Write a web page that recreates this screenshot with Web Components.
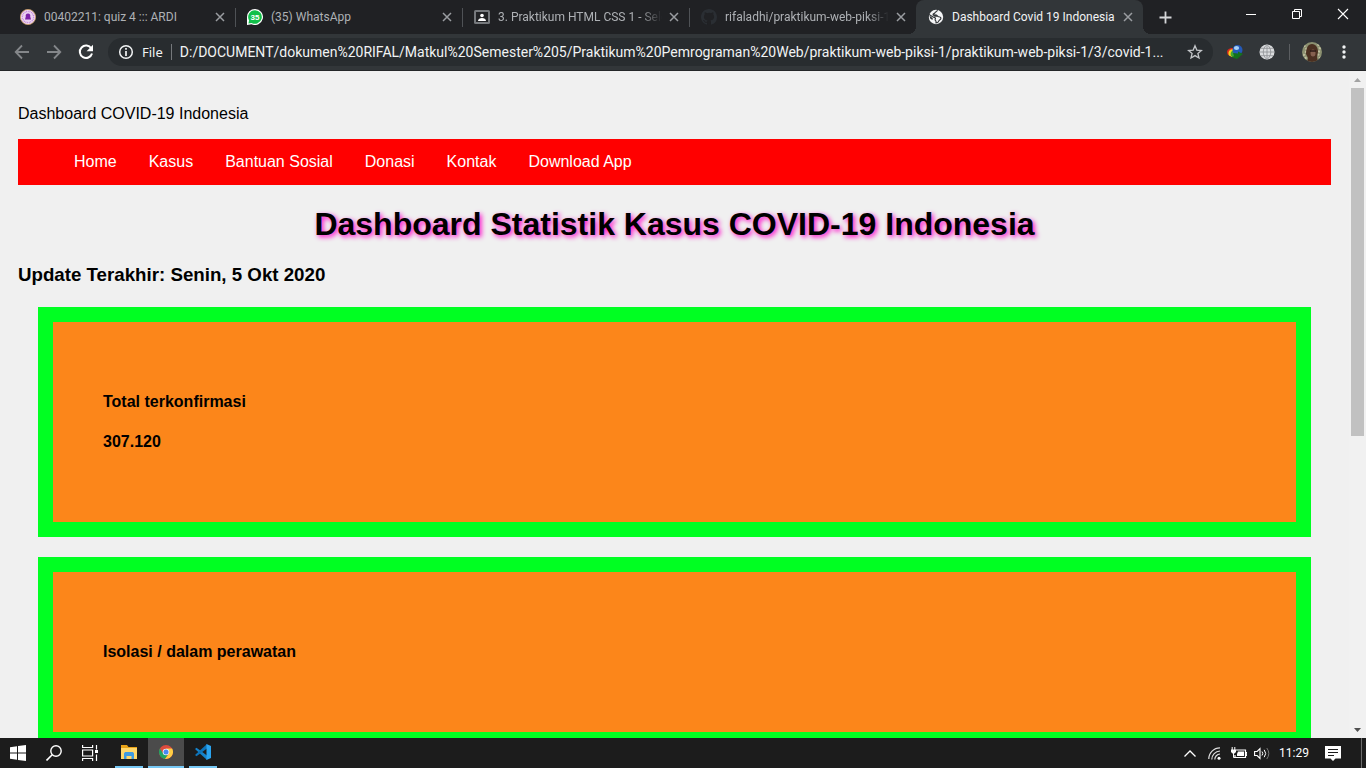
<!DOCTYPE html>
<html lang="id">
<head>
<meta charset="utf-8">
<title>Dashboard Covid 19 Indonesia</title>
<style>
html, body { margin: 0; height: 100%; }
body { overflow: hidden; font-family: "Liberation Sans", Arial, sans-serif; }
</style>
</head>
<body>
<desktop-screen></desktop-screen>
<script>
const define = (name, markup) => {
  const template = document.createElement('template');
  template.innerHTML = '<style>*{box-sizing:border-box} svg{display:block;flex:none} button{border:0;padding:0;margin:0;background:none;color:inherit;font:inherit;display:flex;align-items:center;justify-content:center;flex:none}</style>' + markup;
  customElements.define(name, class extends HTMLElement {
    constructor() {
      super();
      this.attachShadow({ mode: 'open' }).append(template.content.cloneNode(true));
    }
  });
};

define('browser-tab', `
<style>
:host { display: flex; flex: 0 1 227px; min-width: 0; position: relative; align-items: center; padding: 0 8px 0 12px; color: #aeb1b5; }
:host::after { content: ""; position: absolute; right: -1px; top: 8px; width: 1px; height: 19px; background: #4f5256; }
:host([plain])::after { display: none; }
:host([active]) { background: #323639; color: #f1f3f4; border-radius: 8px 8px 0 0; }
:host([active])::before, :host([active])::after { content: ""; display: block; position: absolute; top: auto; bottom: 0; width: 8px; height: 8px; }
:host([active])::before { left: -8px; background: radial-gradient(circle at 0 0, transparent 8px, #323639 8px); }
:host([active])::after { right: -8px; background: radial-gradient(circle at 100% 0, transparent 8px, #323639 8px); }
.title { flex: 1; min-width: 0; margin: 0 5px 0 8px; white-space: nowrap; overflow: hidden; font-size: 12px; line-height: 18px; }
:host([fade]) .title { -webkit-mask-image: linear-gradient(90deg, #000 86%, transparent); mask-image: linear-gradient(90deg, #000 86%, transparent); }
button { width: 14px; height: 16px; color: #9a9da1; }
</style>
<slot name="icon"></slot>
<span class="title"><slot></slot></span>
<button aria-label="Close tab"><svg width="10" height="10" viewBox="0 0 10 10"><path d="M1 1l8 8M9 1l-8 8" stroke="currentColor" stroke-width="1.5"/></svg></button>`);

define('tab-strip', `
<style>
:host { display: flex; height: 34px; background: #202124; padding-left: 8px; flex: none; }
.new { width: 44px; color: #d5d7d9; }
.win { display: flex; margin-left: auto; height: 28px; color: #fff; flex: none; }
.win button { width: 46px; }
</style>
<browser-tab>
  <svg slot="icon" width="16" height="16" viewBox="0 0 16 16"><circle cx="8" cy="8" r="7.6" fill="#f0dcf5" stroke="#c79b6b" stroke-width=".9"/><circle cx="8" cy="8" r="5.6" fill="none" stroke="#c58ad8" stroke-width="1.5" stroke-dasharray="1 .7"/><circle cx="8" cy="8" r="4" fill="#ead0f3"/><path d="M8 4.600c2 0 2.600 1.400 2.200 3L11 10.500H5l.8-2.900c-.4-1.600.2-3 2.200-3z" fill="#7d22a8"/></svg>
  00402211: quiz 4 ::: ARDI</browser-tab>
<browser-tab>
  <svg slot="icon" width="16" height="16" viewBox="0 0 16 16"><path d="M8 0a8 8 0 1 1-3.500 15.200L0 16V8a8 8 0 0 1 8-8z" fill="#fff"/><path d="M8 1.200a6.800 6.800 0 1 1-3.400 12.700L1.400 14.600l.7-3.200A6.800 6.800 0 0 1 8 1.200z" fill="#12c04a"/><text x="8" y="11" font-size="8" font-weight="700" fill="#fff" text-anchor="middle" font-family="Liberation Sans, sans-serif">35</text></svg>
  (35) WhatsApp</browser-tab>
<browser-tab fade>
  <svg slot="icon" width="16" height="16" viewBox="0 0 16 16"><rect x="0" y="1" width="16" height="14" rx="1.500" fill="#76797d"/><rect x="2" y="3" width="12" height="10" fill="#222326"/><circle cx="8" cy="6.500" r="1.800" fill="#fff"/><path d="M4 12c0-2 2-3 4-3s4 1 4 3z" fill="#fff"/></svg>
  3. Praktikum HTML CSS 1 - Sele</browser-tab>
<browser-tab fade plain>
  <svg slot="icon" width="16" height="16" viewBox="0 0 16 16"><path fill="#2a2e33" fill-rule="evenodd" d="M8 0C3.580 0 0 3.580 0 8c0 3.540 2.290 6.530 5.470 7.590.4.070.550-.170.550-.380v-1.490c-2.010.370-2.530-.490-2.690-.940-.090-.230-.480-.940-.820-1.130-.280-.150-.680-.520-.010-.530.630-.010 1.080.580 1.230.820.720 1.210 1.870.870 2.330.660.070-.520.280-.870.510-1.070-1.780-.200-3.640-.890-3.640-3.950 0-.870.310-1.590.820-2.150-.080-.200-.360-1.020.080-2.120 0 0 .670-.210 2.200.820A7.500 7.500 0 0 1 8 3.860c.680 0 1.360.090 2 .270 1.530-1.040 2.200-.820 2.200-.820.440 1.100.160 1.920.080 2.120.510.560.820 1.270.820 2.150 0 3.070-1.870 3.750-3.650 3.950.290.250.540.730.540 1.480v2.200c0 .210.150.460.550.380A8 8 0 0 0 16 8c0-4.420-3.580-8-8-8z"/></svg>
  rifaladhi/praktikum-web-piksi-1</browser-tab>
<browser-tab active>
  <svg slot="icon" width="16" height="16" viewBox="0 0 16 16"><circle cx="8" cy="8" r="7.200" fill="#f4f5f6"/><path d="M9.300.8c.5 1.300-.6 1.700-1.700 2.200-.8.400-.5 1.400-1.500 1.600-.9.200-1.300.7-.9 1.500h3.100c1 0 1.100 1.700 2.300 1.700 1.200.1 2.400.3 2.300 1.600-.1 1.300-1.500 1.200-2 2.400-.4 1.200-1.600 2.100-2.900 2.200v-1.600c0-.8-.9-.8-.9-1.600 0-.7.600-1 .3-1.700C6.900 8.200 5.500 8.600 4.600 7.700L1 5.400" fill="none" stroke="#323639" stroke-width="1.100"/><path d="M5.300 5.800h2.800l1.700 2H6.400zM1.400 6.500l3.400 2.800-.4 1.600-2.200-1.400z" fill="#323639"/></svg>
  Dashboard Covid 19 Indonesia</browser-tab>
<button class="new" aria-label="New tab"><svg width="13" height="13" viewBox="0 0 13 13"><path d="M6.500 .5v12M.5 6.500h12" stroke="currentColor" stroke-width="1.800"/></svg></button>
<div class="win">
  <button aria-label="Minimize"><svg width="10" height="10" viewBox="0 0 10 10"><path d="M0 5.500h10" stroke="currentColor"/></svg></button>
  <button aria-label="Restore"><svg width="10" height="10" viewBox="0 0 10 10"><path d="M.5 2.500h7v7h-7zM2.500 2.500v-2h7v7h-2" fill="none" stroke="currentColor"/></svg></button>
  <button aria-label="Close"><svg width="12" height="12" viewBox="0 0 12 12"><path d="M1 1l10 10M11 1L1 11" stroke="currentColor" stroke-width="1.100"/></svg></button>
</div>`);

define('address-bar', `
<style>
:host { display: flex; height: 37px; background: #323639; border-bottom: 1px solid #242628; align-items: center; padding: 0 10px 0 6px; flex: none; color: #f1f3f4; }
.nav { width: 32px; height: 32px; color: #84878a; }
.nav.on { color: #fff; }
.box { display: flex; flex: 1; min-width: 0; height: 28px; border-radius: 14px; background: #282c2f; align-items: center; margin: 0 6px; padding: 0 10px; }
label { font-family: "Noto Sans", "Open Sans", sans-serif; font-size: 13px; line-height: 18px; padding: 0 8px; border-right: 1px solid #75787b; height: 16px; display: flex; align-items: center; }
input { flex: 1; min-width: 0; border: 0; padding: 0 0 0 8px; margin: 0; background: none; outline: 0; color: inherit; font-family: inherit; font-size: 14px; line-height: 18px; height: 20px; text-overflow: ellipsis; }
.star { width: 16px; margin-left: 16px; }
.ext { width: 32px; }
hr { border: 0; width: 1px; height: 16px; background: #5b5e61; margin: 0 12px 0 6px; flex: none; }
.me { width: 20px; }
.more { width: 24px; margin-left: 10px; }
</style>
<button class="nav" aria-label="Back"><svg width="16" height="16" viewBox="0 0 16 16"><path d="M15 8H2M8 1.500L1.700 8 8 14.500" fill="none" stroke="currentColor" stroke-width="1.800"/></svg></button>
<button class="nav" aria-label="Forward"><svg width="16" height="16" viewBox="0 0 16 16"><path d="M1 8h13M8 1.500L14.300 8 8 14.500" fill="none" stroke="currentColor" stroke-width="1.800"/></svg></button>
<button class="nav on" aria-label="Reload"><svg width="16" height="16" viewBox="0 0 16 16"><path d="M13.300 4.500A6.200 6.200 0 1 0 14 9.500" fill="none" stroke="currentColor" stroke-width="2"/><path d="M15 .8v6.400H8.600z" fill="currentColor"/></svg></button>
<div class="box">
  <svg width="16" height="16" viewBox="0 0 16 16"><circle cx="8" cy="8" r="6.300" fill="none" stroke="#f1f3f4" stroke-width="1.500"/><path d="M8 7v5M8 4v1.700" stroke="#f1f3f4" stroke-width="1.700"/></svg>
  <label for="url">File</label>
  <input id="url" type="text" spellcheck="false" value="D:/DOCUMENT/dokumen%20RIFAL/Matkul%20Semester%205/Praktikum%20Pemrograman%20Web/praktikum-web-piksi-1/praktikum-web-piksi-1/3/covid-1...">
  <button class="star" aria-label="Bookmark"><svg width="16" height="16" viewBox="0 0 16 16"><path d="M8 1.800l1.800 4.300 4.600.4-3.500 3 1.100 4.500L8 11.600 4 14l1.100-4.500-3.500-3 4.600-.4z" fill="none" stroke="#c3c6c9" stroke-width="1.300"/></svg></button>
</div>
<button class="ext" aria-label="Download manager"><svg width="18" height="16" viewBox="0 0 18 16"><path d="M8 4C2 3.500-.5 7 2 11l3 1 1-3z" fill="#d8281e"/><path d="M8 5C3 5 1.500 8 3 11.500l3 1.500 1-4z" fill="#f5d21a"/><path d="M8 6.500C5 6.500 4 9 5 12l4 2V8z" fill="#3fa535"/><circle cx="11.500" cy="6" r="5" fill="#2459b8"/><ellipse cx="10.500" cy="4" rx="2.600" ry="2" fill="#a8d1f5"/><path d="M7 9l5 .5V7.500l5 2.500-6 5-5-1.500 2-1.500z" fill="#14701c"/></svg></button>
<button class="ext" aria-label="Globe extension"><svg width="16" height="16" viewBox="0 0 16 16"><circle cx="8" cy="8" r="7.500" fill="#dadcde"/><path d="M8 .5v15M.5 8h15M2 4.300h12M2 11.700h12M8 .5c-5 4-5 11 0 15M8 .5c5 4 5 11 0 15" fill="none" stroke="#8b8e92" stroke-width=".8"/></svg></button>
<hr>
<button class="me" aria-label="Profile"><svg width="20" height="20" viewBox="0 0 20 20"><clipPath id="c"><circle cx="10" cy="10" r="10"/></clipPath><g clip-path="url(#c)"><path fill="#8b9070" d="M0 0h20v20H0z"/><path d="M2 3l3 5-3 5 3 5M16 2l2 5-2 5 2 4" stroke="#c2c0a0" stroke-width="2" fill="none" stroke-dasharray="2 1.500"/><path d="M10 2c4 0 6 4 6 8l-1 5 1 5H5l1-4-2-4c0-6 2-10 6-10z" fill="#4b3021"/><ellipse cx="11" cy="11" rx="2.500" ry="3.500" fill="#85604f"/><path d="M8 9h6" stroke="#2b1a14" stroke-width="1.500"/></g></svg></button>
<button class="more" aria-label="Menu"><svg width="4" height="14" viewBox="0 0 4 14"><g fill="#f1f3f4"><circle cx="2" cy="2" r="1.700"/><circle cx="2" cy="7" r="1.700"/><circle cx="2" cy="12" r="1.700"/></g></svg></button>`);

define('site-nav', `
<style>
:host { display: block; background: #f00; }
ul { display: flex; list-style: none; margin: 0; padding: 0 0 0 40px; }
a { display: block; padding: 14px 16px; font-size: 16px; line-height: 18px; color: #fff; text-decoration: none; }
</style>
<nav><ul>
<li><a href="#home">Home</a></li><li><a href="#kasus">Kasus</a></li><li><a href="#bansos">Bantuan Sosial</a></li>
<li><a href="#donasi">Donasi</a></li><li><a href="#kontak">Kontak</a></li><li><a href="#app">Download App</a></li>
</ul></nav>`);

define('stat-card', `
<style>
:host { display: flex; flex-direction: column; gap: 22px; margin: 20px; padding: 71px 50px; border: 15px solid #00ff22; background: #fc861a; font-size: 16px; line-height: 18px; font-weight: 700; }
:host(:not(:last-of-type)) { margin-bottom: 0; }
::slotted(h4) { margin: 0; font-size: 16px; }
</style>
<slot></slot>`);

define('covid-dashboard', `
<style>
:host { display: block; padding: 34px 18px 0; flex: 1; min-width: 0; overflow: hidden; color: #000; }
p { margin: 0 0 16px; font-size: 16px; line-height: 18px; }
h1 { margin: 20px 0; text-align: center; font-size: 32px; line-height: 38px; text-shadow: 2px 2px 5px #ff00c8; }
h3 { margin: 0; line-height: 24px; }
</style>
<p>Dashboard COVID-19 Indonesia</p>
<site-nav></site-nav>
<h1>Dashboard Statistik Kasus COVID-19 Indonesia</h1>
<h3>Update Terakhir: Senin, 5 Okt 2020</h3>
<stat-card><h4>Total terkonfirmasi</h4><h4>307.120</h4></stat-card>
<stat-card><h4>Isolasi / dalam perawatan</h4></stat-card>`);

define('scroll-bar', `
<style>
:host { display: flex; flex-direction: column; align-items: center; justify-content: space-between; width: 17px; flex: none; background: #f1f1f1; }
.end { height: 17px; display: flex; align-items: center; }
.track { flex: 1; width: 13px; }
.thumb { height: 55%; background: #c1c1c1; }
</style>
<span class="end"><svg width="7" height="4" viewBox="0 0 7 4"><path d="M0 4l3.500-4L7 4z" fill="#a3a3a3"/></svg></span>
<div class="track"><div class="thumb"></div></div>
<span class="end"><svg width="7" height="4" viewBox="0 0 7 4"><path d="M0 0l3.500 4L7 0z" fill="#505050"/></svg></span>`);

define('task-bar', `
<style>
:host { display: flex; height: 30px; flex: none; background: #1c1c1c; color: #fff; justify-content: space-between; }
div { display: flex; }
button { width: 36px; height: 30px; }
.app { width: 28px; border-bottom: 2px solid #76c8f5; margin: 0 5px; }
.app:first-of-type { margin-left: 7px; }
.chrome { width: 36px; margin: 0; background: #4b4b4b; }
.tray button { width: 23px; }
.tray .clock { width: 42px; font-size: 12px; }
.tray .note { width: 36px; margin-right: 10px; }
.tray { border-right: 1px solid #6b6b6b; margin-right: 4px; }
</style>
<div>
<button aria-label="Start"><svg width="16" height="16" viewBox="0 0 16 16"><path fill="#fff" d="M0 2.200l7-1v6.300H0zM8 1l8-1v7.500H8zM0 8.500h7v6.300l-7-1zM8 8.500h8V16l-8-1z"/></svg></button>
<button aria-label="Search"><svg width="16" height="16" viewBox="0 0 16 16"><circle cx="10" cy="6" r="5.200" fill="none" stroke="#fff" stroke-width="1.400"/><path d="M6.200 9.800L.5 15.500" stroke="#fff" stroke-width="1.600"/></svg></button>
<button aria-label="Task view"><svg width="16" height="16" viewBox="0 0 16 16"><path d="M.6 0v2.500h10V0M.6 16v-2.500h10V16M.6 5h10v6H.6zM14.500 0v4.500M14.500 9.500V16" fill="none" stroke="#fff" stroke-width="1.200"/><path d="M13 5h3v3h-3z" fill="#fff"/></svg></button>
</div>
<div style="flex:1">
<button class="app" aria-label="File Explorer"><svg width="16" height="14" viewBox="0 0 16 14"><path d="M0 0h6l1.500 2H16v3H0z" fill="#e8a317"/><path d="M0 3h16v11H0z" fill="#ffd76a"/><path d="M3 14V8.500l1-1.500h8l1 1.500V14h-2.500v-3h-5v3z" fill="#3f9be0"/></svg></button>
<button class="app chrome" aria-label="Chrome"><svg width="14" height="14" viewBox="0 0 14 14"><circle cx="7" cy="7" r="7" fill="#dd4b3e"/><path d="M.9 3.500A7 7 0 0 0 6 13.900L9.800 8.600 7 10 4.200 8.600z" fill="#1fa463"/><path d="M13.100 3.600H7L10 8.600 6 13.900A7 7 0 0 0 13.100 3.600z" fill="#ffce44"/><circle cx="7" cy="7" r="3.300" fill="#f2f2f2"/><circle cx="7" cy="7" r="2.500" fill="#4688f1"/></svg></button>
<button class="app" aria-label="Visual Studio Code"><svg width="16" height="16" viewBox="0 0 16 16"><path d="M0 5l1.500-1.300L12 11.500V16z" fill="#1583cb"/><path d="M0 11l1.500 1.300L12 4.500V0z" fill="#0d74ba"/><path d="M11.500 0L16 2v12l-4.500 2z" fill="#2aa4f0"/></svg></button>
</div>
<div class="tray">
<button aria-label="Show hidden icons"><svg width="12" height="7" viewBox="0 0 12 7"><path d="M.5 6.500L6 1l5.500 5.500" fill="none" stroke="#fff" stroke-width="1.300"/></svg></button>
<button aria-label="Network" style="width:26px"><svg width="13" height="13" viewBox="0 0 13 13"><g fill="none" stroke="#ddd" stroke-width="1.200"><path d="M.8 12A11.200 11.200 0 0 1 12 .8M3.800 12.500A8.500 8.500 0 0 1 12 4M6.800 12.500A5.500 5.500 0 0 1 12 7"/></g><circle cx="11" cy="11.300" r="1.500" fill="#fff"/></svg></button>
<button aria-label="Battery"><svg width="16" height="12" viewBox="0 0 16 12"><path d="M5 3h9.500v7.500H4V8M14.500 5.500h1.300v3h-1.300" fill="none" stroke="#fff" stroke-width="1.200"/><path d="M7 4.500h6V9H6V7zM0 2.500h5V5L3.500 6.500h-2L0 5z" fill="#fff"/><path d="M1.200 0v3M3.800 0v3M2.500 6v4.500h2" fill="none" stroke="#fff"/></svg></button>
<button aria-label="Volume"><svg width="16" height="13" viewBox="0 0 16 13"><path d="M.6 4.500h2.500L6 1.500v10l-2.900-3H.6z" fill="none" stroke="#fff" stroke-width="1.100"/><path d="M8 4.500q1.600 2 0 4M10.200 2.800q3 3.700 0 7.400" fill="none" stroke="#fff"/><path d="M12.800 1q4 5.500 0 11" fill="none" stroke="#777"/></svg></button>
<button class="clock">11:29</button>
<button class="note" aria-label="Notifications"><svg width="16" height="15" viewBox="0 0 16 15"><path d="M0 0h16v12.500h-5.500L8 15l-2.500-2.500H0z" fill="#fff"/><path d="M3 3.500h10M3 6.500h10M3 9.500h6" stroke="#1c1c1c"/></svg></button>
</div>`);

define('desktop-screen', `
<style>
:host { display: flex; flex-direction: column; height: 100vh; background: #f0f0f0; }
tab-strip, address-bar, task-bar { font-family: Roboto, "Noto Sans", sans-serif; }
main { flex: 1; min-height: 0; display: flex; }
</style>
<tab-strip></tab-strip>
<address-bar></address-bar>
<main><covid-dashboard></covid-dashboard><scroll-bar></scroll-bar></main>
<task-bar></task-bar>`);
</script>
</body>
</html>
